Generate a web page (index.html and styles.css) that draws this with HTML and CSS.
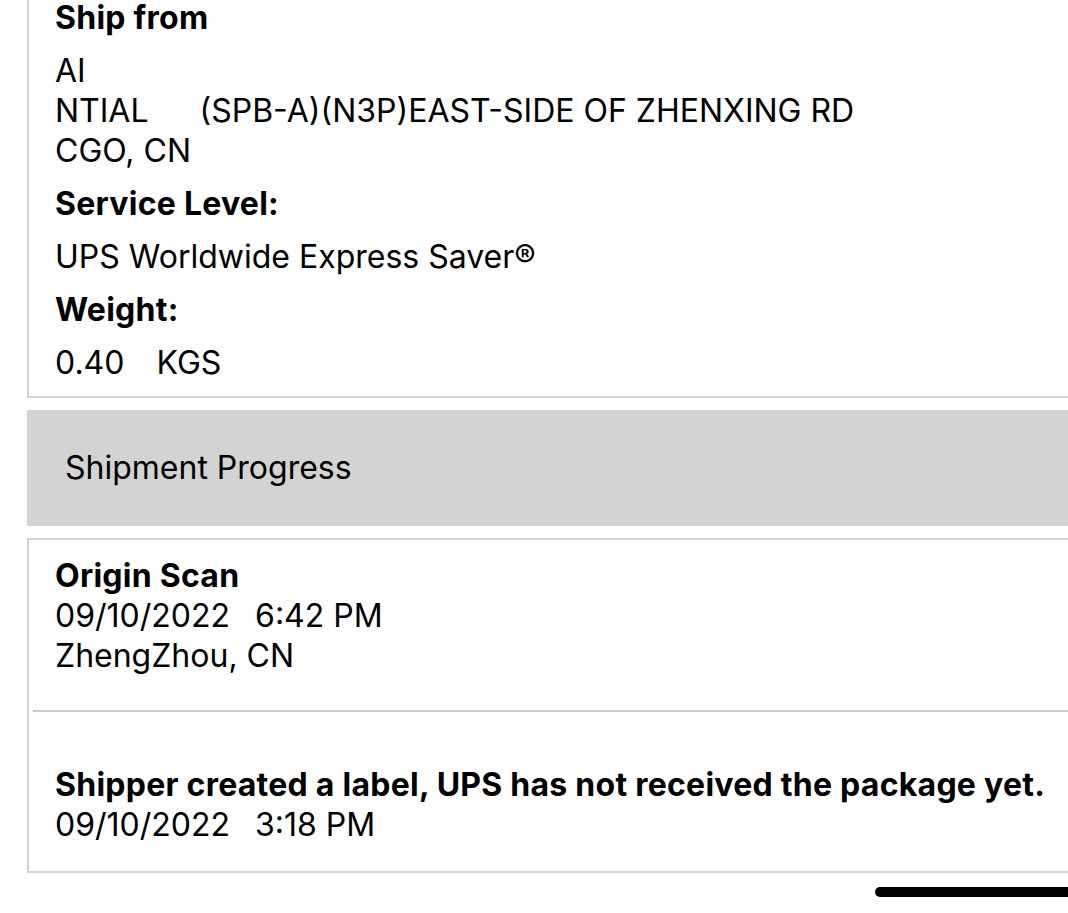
FILE: index.html
```html
<!DOCTYPE html>
<html lang="en">

<head>
  <meta charset="UTF-8">
  <meta name="viewport" content="width=device-width, initial-scale=1.0">
  <title>Shipment Details</title>
  <link rel="stylesheet" href="styles.css">
</head>

<body>
  <div class="page">
    <div class="card details">
      <div class="label">Ship from</div>
      <div class="value">
        <div>AI</div>
        <div>NTIAL<span class="gap-xl"></span>(SPB-A)(N3P)EAST-SIDE OF ZHENXING RD</div>
        <div>CGO, CN</div>
      </div>
      <div class="label">Service Level:</div>
      <div class="value">UPS Worldwide Express Saver®</div>
      <div class="label">Weight:</div>
      <div class="value">0.40<span class="gap-lg"></span>KGS</div>
    </div>

    <div class="section-title">Shipment Progress</div>

    <div class="card progress">
      <div class="event first">
        <div class="label">Origin Scan</div>
        <div>09/10/2022<span class="gap"></span>6:42 PM</div>
        <div>ZhengZhou, CN</div>
      </div>
      <div class="event last">
        <div class="label">Shipper created a label, UPS has not received the package yet.</div>
        <div>09/10/2022<span class="gap"></span>3:18 PM</div>
      </div>
    </div>

    <div class="home-bar"></div>
  </div>
</body>

</html>
```

FILE: styles.css
```css
body {
  font-family: 'Inter', 'Roboto', sans-serif;
  font-size: 32px;
  line-height: 40px;
  color: #000;
  background-color: #fff;
  margin: 0;
  padding: 0;
  overflow: hidden;
}

.page {
  margin-top: -2px;
  padding-left: 27px;
}

.card {
  border: 2px solid #d3d3d3;
  border-right: none;
}

.details {
  border-top: none;
  padding: 0 0 13px 26px;
  display: flex;
  flex-direction: column;
  gap: 13px;
}

.label {
  font-weight: 650;
  letter-spacing: 0.25px;
}

.gap {
  display: inline-block;
  width: 25px;
}

.gap-lg {
  display: inline-block;
  width: 32px;
}

.gap-xl {
  display: inline-block;
  width: 51px;
}

.section-title {
  margin-top: 12px;
  height: 116px;
  background-color: #d3d3d3;
  display: flex;
  align-items: center;
  padding-left: 38px;
}

.progress {
  margin-top: 12px;
}

.event {
  padding-left: 26px;
}

.event.first {
  padding-top: 16px;
  padding-bottom: 34px;
  margin-left: 4px;
  padding-left: 22px;
  border-bottom: 2px solid #d0cbc5;
}

.event.last {
  padding-top: 53px;
  padding-bottom: 26px;
}

.home-bar {
  margin: 14px 0 0 848px;
  height: 10px;
  border-radius: 5px 0 0 5px;
  background-color: #000;
}
```
